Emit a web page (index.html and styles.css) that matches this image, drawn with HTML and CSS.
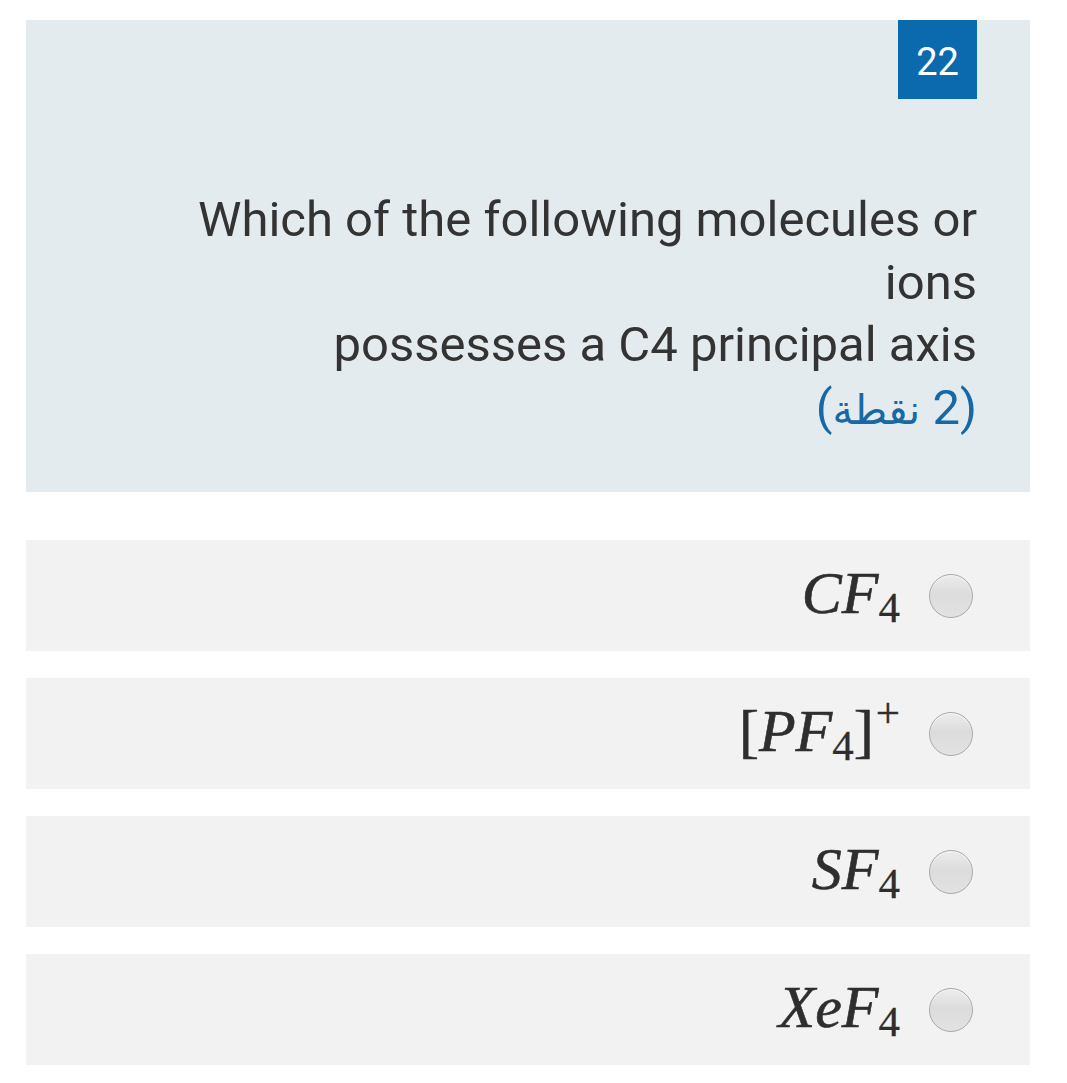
FILE: index.html
```html
<!DOCTYPE html>
<html lang="en">
<head>
<meta charset="utf-8">
<title>Question 22</title>
<link rel="stylesheet" href="styles.css">
</head>
<body>
<div class="page">
  <section class="question">
    <div class="badge-row"><div class="badge">22</div></div>
    <div class="qtext">
      <div>Which of the following molecules or</div>
      <div>ions</div>
      <div>possesses a C4 principal axis</div>
      <div class="points" dir="rtl">(2 <span class="ar">نقطة</span>)</div>
    </div>
  </section>
  <div class="options">
    <label class="option">
      <span class="formula"><i>C</i><i>F</i><sub>4</sub></span>
      <span class="radio"></span>
    </label>
    <label class="option">
      <span class="formula">[<i>P</i><i>F</i><sub>4</sub>]<sup>+</sup></span>
      <span class="radio"></span>
    </label>
    <label class="option">
      <span class="formula"><i>S</i><i>F</i><sub>4</sub></span>
      <span class="radio"></span>
    </label>
    <label class="option">
      <span class="formula"><i>X</i><i>e</i><i>F</i><sub>4</sub></span>
      <span class="radio"></span>
    </label>
  </div>
</div>
</body>
</html>
```
FILE: styles.css
```css
html, body {
  margin: 0;
  padding: 0;
  background: #ffffff;
}
body {
  font-family: Roboto, "Noto Sans", "DejaVu Sans", sans-serif;
  color: #333333;
}
.page {
  padding: 20px 37px 0 26px;
}
.question {
  background: #e4ebef;
  padding: 0 53px 53px 0;
  height: 472px;
  box-sizing: border-box;
}
.badge-row {
  display: flex;
  justify-content: flex-end;
}
.badge {
  width: 79px;
  height: 79px;
  background: #0b6aae;
  color: #ffffff;
  font-size: 38px;
  padding-top: 4px;
  box-sizing: border-box;
  display: flex;
  align-items: center;
  justify-content: center;
}
.qtext {
  margin-top: 90px;
  text-align: right;
  font-size: 49px;
  line-height: 62.5px;
  color: #333333;
}
.points {
  color: #1668a6;
}
.points .ar {
  font-size: 41px;
}
.options {
  margin-top: 48px;
  display: flex;
  flex-direction: column;
  gap: 27px;
}
.option {
  height: 111px;
  background: #f2f2f2;
  display: flex;
  align-items: center;
  justify-content: flex-end;
  gap: 29px;
  padding-right: 57px;
}
.formula {
  font-family: "Liberation Serif", "Times New Roman", serif;
  font-size: 60px;
  line-height: 1;
  color: #2e2e2e;
  -webkit-text-stroke: 0.6px #2e2e2e;
  white-space: nowrap;
  position: relative;
  top: -3px;
}
.formula i {
  font-style: italic;
}
.formula sub {
  font-size: 43px;
  vertical-align: -9px;
  line-height: 0;
  -webkit-text-stroke: 0.3px #2e2e2e;
}
.formula sup {
  font-size: 43px;
  vertical-align: 24px;
  line-height: 0;
  padding-left: 2px;
  -webkit-text-stroke: 0.3px #2e2e2e;
}
.radio {
  width: 42px;
  height: 42px;
  border-radius: 50%;
  border: 1px solid #a9a9a9;
  background: linear-gradient(#ececec, #dcdcdc 45%, #e2e2e2);
  box-shadow: inset 0 1px 1px rgba(255,255,255,0.6);
  flex: none;
}
```
